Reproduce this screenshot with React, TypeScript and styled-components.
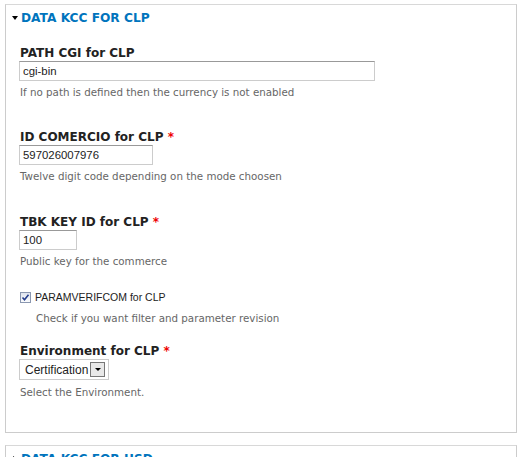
import React from 'react';
import styled, { createGlobalStyle } from 'styled-components';

const GlobalStyle = createGlobalStyle`
  html, body {
    margin: 0;
    padding: 0;
    background: #fff;
  }
  body {
    font-family: "DejaVu Sans", Verdana, sans-serif;
    font-size: 12px;
    color: #333;
  }
`;

const Page = styled.div`
  padding: 4px 5px 0 5px;
  height: 457px;
  overflow: hidden;
  box-sizing: border-box;
`;

const Fieldset = styled.div<{ collapsed?: boolean }>`
  border: 1px solid #ccc;
  border-top-color: #d8d8d8;
  width: 512px;
  box-sizing: border-box;
  padding: 0 0 ${p => (p.collapsed ? '20px' : '33px')} 0;
  margin-bottom: 12px;
`;

const Legend = styled.div`
  display: flex;
  align-items: center;
  height: 24px;
  padding-left: 6px;
  padding-top: 1px;
  font-weight: bold;
  font-size: 12.2px;
  color: #0074bd;
  text-transform: uppercase;
`;

const Caret = styled.span<{ open?: boolean }>`
  width: 0;
  height: 0;
  border-left: 3px solid transparent;
  border-right: 3px solid transparent;
  border-top: 4px solid #000;
  margin-right: 3px;
  transform: ${p => (p.open ? 'none' : 'rotate(-90deg)')};
`;

const Body = styled.div`
  padding: 0 13px;
`;

const Item = styled.div<{ gap?: number }>`
  margin-top: ${p => p.gap ?? 0}px;
`;

const Label = styled.label`
  display: block;
  font-weight: bold;
  font-size: 12px;
  color: #222;
  line-height: 15px;
  margin-left: 1px;
`;

const Required = styled.span`
  color: #e00;
`;

const TextInput = styled.input<{ w: number }>`
  display: block;
  box-sizing: border-box;
  width: ${p => p.w}px;
  height: 20px;
  border: 1px solid #ccc;
  border-top-color: #999;
  padding: 1px 3px;
  font-family: "Liberation Sans", Arial, sans-serif;
  font-size: 11.4px;
  color: #222;
  outline: none;
`;

const Description = styled.div<{ indent?: number; top?: number }>`
  font-size: 10.3px;
  color: #666;
  line-height: 14px;
  margin-top: ${p => p.top ?? 4}px;
  margin-left: ${p => p.indent ?? 1}px;
`;

const CheckRow = styled.label`
  display: flex;
  align-items: center;
  gap: 4px;
  font-family: "Liberation Sans", Arial, sans-serif;
  font-size: 10.5px;
  color: #222;
  margin-left: 1px;
`;

const CheckBox = styled.span`
  width: 11px;
  height: 11px;
  box-sizing: border-box;
  border: 1px solid #8a97b0;
  background: linear-gradient(#dfe4ee, #fafbfd);
  display: flex;
  align-items: center;
  justify-content: center;
`;

const Select = styled.div`
  display: inline-flex;
  align-items: center;
  box-sizing: border-box;
  height: 21px;
  border: 1px solid #ccc;
  padding: 0 3px 0 5px;
  gap: 2px;
  font-family: "Liberation Sans", Arial, sans-serif;
  font-size: 12px;
  color: #222;
`;

const SelectButton = styled.span`
  width: 15px;
  height: 15px;
  box-sizing: border-box;
  border: 1px solid #777;
  background: #e8e8e8;
  display: flex;
  align-items: center;
  justify-content: center;

  &::after {
    content: '';
    border-left: 3px solid transparent;
    border-right: 3px solid transparent;
    border-top: 3px solid #000;
  }
`;

export default function App() {
  return (
    <>
      <GlobalStyle />
      <Page>
        <Fieldset>
          <Legend>
            <Caret open />
            Data KCC for CLP
          </Legend>
          <Body>
            <Item gap={16}>
              <Label>PATH CGI for CLP</Label>
              <TextInput w={356} defaultValue="cgi-bin" />
              <Description>If no path is defined then the currency is not enabled</Description>
            </Item>
            <Item gap={31}>
              <Label>
                ID COMERCIO for CLP <Required>*</Required>
              </Label>
              <TextInput w={134} defaultValue="597026007976" />
              <Description>Twelve digit code depending on the mode choosen</Description>
            </Item>
            <Item gap={32}>
              <Label>
                TBK KEY ID for CLP <Required>*</Required>
              </Label>
              <TextInput w={58} defaultValue="100" />
              <Description>Public key for the commerce</Description>
            </Item>
            <Item gap={23}>
              <CheckRow>
                <CheckBox>
                  <svg width="9" height="9" viewBox="0 0 9 9">
                    <path d="M1.5 4.5 L3.5 6.8 L7.5 1.8" stroke="#233c8c" strokeWidth="1.6" fill="none" />
                  </svg>
                </CheckBox>
                PARAMVERIFCOM for CLP
              </CheckRow>
              <Description indent={17} top={8}>
                Check if you want filter and parameter revision
              </Description>
            </Item>
            <Item gap={19}>
              <Label>
                Environment for CLP <Required>*</Required>
              </Label>
              <Select>
                Certification
                <SelectButton />
              </Select>
              <Description top={5}>Select the Environment.</Description>
            </Item>
          </Body>
        </Fieldset>
        <Fieldset collapsed>
          <Legend>
            <Caret />
            Data KCC for USD
          </Legend>
        </Fieldset>
      </Page>
    </>
  );
}
